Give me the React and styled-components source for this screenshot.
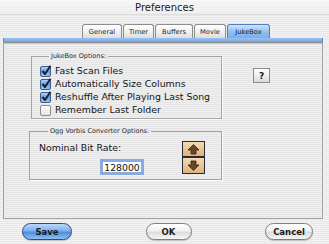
import styled, { createGlobalStyle } from "styled-components"

const GlobalStyle = createGlobalStyle`
  html, body {
    margin: 0;
    padding: 0;
  }
  body {
    width: 329px;
    height: 244px;
    overflow: hidden;
    font-family: "DejaVu Sans", "Liberation Sans", sans-serif;
    color: #1c1c1c;
    background: repeating-linear-gradient(to bottom, #f3f3f3 0 1px, #e7e7e7 1px 2px);
  }
`

const Window = styled.div`
  display: flex;
  flex-direction: column;
  width: 329px;
  height: 244px;
`

const TitleBar = styled.div`
  height: 14px;
  display: flex;
  align-items: center;
  justify-content: center;
  font-size: 10px;
  color: #202020;
  background: linear-gradient(to bottom, rgba(255,255,255,0.5), rgba(255,255,255,0.1));
  border-bottom: 1px solid rgba(0, 0, 0, 0.1);
`

const TabRow = styled.div`
  display: flex;
  gap: 1px;
  align-items: flex-end;
  height: 14px;
  margin-top: 9px;
  padding-left: 82px;
`

const Tab = styled.div`
  box-sizing: border-box;
  width: ${p => p.$w}px;
  height: 14px;
  display: flex;
  align-items: center;
  justify-content: center;
  font-size: 6.7px;
  color: #222;
  border: 1px solid ${p => (p.$active ? "#4f7fbf" : "#8c8c8c")};
  border-bottom: none;
  border-radius: 3px 3px 0 0;
  background: ${p =>
    p.$active
      ? "linear-gradient(to bottom, #cfe3fa, #8fbcf0 55%, #7aaeea)"
      : "linear-gradient(to bottom, #ffffff, #f1f1f1 50%, #dedede)"};
`

const Panel = styled.div`
  display: flex;
  flex-direction: column;
  height: 181px;
  margin: 0 6px 0 3px;
`

const TabBar = styled.div`
  height: 4px;
  background: linear-gradient(to bottom, #9cc3f2, #6ea2e4);
  border-left: 1px solid #5e8cc8;
  border-right: 1px solid #5e8cc8;
`

const PaneBody = styled.div`
  flex: 1;
  display: flex;
  align-items: flex-start;
  border: 1px solid #a2a2a2;
  border-top: 1px solid #8e8e8e;
  box-shadow: inset 0 1px 0 #c9c9c9;
  background: repeating-linear-gradient(to bottom, #efefef 0 1px, #e5e5e5 1px 2px);
`

const Groups = styled.div`
  display: flex;
  flex-direction: column;
`

const Group = styled.fieldset`
  box-sizing: border-box;
  width: ${p => p.$w}px;
  margin: ${p => p.$top}px 0 0 ${p => p.$left}px;
  padding: ${p => p.$pad};
  border: 1px solid #a4a4a4;
  box-shadow: 1px 1px 0 rgba(255, 255, 255, 0.8);
`

const Legend = styled.legend`
  font-size: 6.5px;
  line-height: 8px;
  padding: 0 2px;
  margin-left: 9px;
  color: #2a2a2a;
`

const CheckRow = styled.label`
  display: flex;
  align-items: center;
  gap: 2px;
  height: 13px;
  font-size: 9.4px;
  color: #151515;
  white-space: nowrap;
`

const HelpButton = styled.div`
  box-sizing: border-box;
  width: 17px;
  height: 15px;
  margin: 25px 0 0 31px;
  display: flex;
  align-items: center;
  justify-content: center;
  font-size: 9px;
  font-weight: bold;
  border: 1px solid #8a8a8a;
  background: linear-gradient(to bottom, #ffffff, #ececec 60%, #d9d9d9);
`

const RateRow = styled.div`
  display: flex;
  align-items: flex-start;
`

const RateColumn = styled.div`
  display: flex;
  flex-direction: column;
  width: 105px;
`

const FieldLabel = styled.div`
  font-size: 9.4px;
  line-height: 13px;
  color: #151515;
  white-space: nowrap;
`

const NumberField = styled.input`
  box-sizing: border-box;
  width: 44px;
  height: 16px;
  margin: 5px 0 0 61px;
  padding: 0;
  text-align: center;
  font-family: "DejaVu Sans", sans-serif;
  font-size: 9.3px;
  color: #111;
  background: #fff;
  border: 2px solid #82acea;
  box-shadow: inset 0 0 0 1px #9aa9bf;
  outline: none;
`

const StepperWrap = styled.div`
  margin-left: 38px;
  line-height: 0;
`

const Footer = styled.div`
  display: flex;
  justify-content: space-between;
  padding: 4px 16px 0 22px;
`

const PushButton = styled.div`
  box-sizing: border-box;
  width: ${p => p.$w}px;
  height: 17px;
  display: flex;
  align-items: center;
  justify-content: center;
  font-size: 8.5px;
  font-weight: bold;
  color: #1b1b1b;
  border-radius: 9px;
  border: 1px solid ${p => (p.$primary ? "#2d4a7a" : "#7d7d7d")};
  background: ${p =>
    p.$primary
      ? "linear-gradient(to bottom, #bcd8f8, #7fb0ee 45%, #4f8de0 55%, #8cc0f4)"
      : "linear-gradient(to bottom, #ffffff, #f2f2f2 45%, #dcdcdc 55%, #f7f7f7)"};
  box-shadow: 0 1px 1px rgba(0, 0, 0, 0.2);
`

function CheckBox({ checked }) {
  return (
    <svg width="13" height="12" viewBox="0 0 13 12">
      <defs>
        <linearGradient id="cbBlue" x1="0" y1="0" x2="0" y2="1">
          <stop offset="0" stopColor="#b7d4f6" />
          <stop offset="0.5" stopColor="#6aa0e6" />
          <stop offset="1" stopColor="#9cc6f3" />
        </linearGradient>
        <linearGradient id="cbWhite" x1="0" y1="0" x2="0" y2="1">
          <stop offset="0" stopColor="#ffffff" />
          <stop offset="1" stopColor="#e4e4e4" />
        </linearGradient>
      </defs>
      <rect
        x="0.5"
        y="1.5"
        width="10"
        height="10"
        rx="1.5"
        fill={checked ? "url(#cbBlue)" : "url(#cbWhite)"}
        stroke={checked ? "#3d5c8c" : "#8a8a8a"}
      />
      {checked && (
        <path
          d="M2.5 6 L5 9 L10.5 0.8"
          fill="none"
          stroke="#1a2232"
          strokeWidth="2"
          strokeLinejoin="round"
        />
      )}
    </svg>
  )
}

function Stepper() {
  return (
    <svg width="23" height="33" viewBox="0 0 23 33">
      <defs>
        <linearGradient id="tan" x1="0" y1="0" x2="0" y2="1">
          <stop offset="0" stopColor="#f4dcb6" />
          <stop offset="1" stopColor="#dcb07a" />
        </linearGradient>
      </defs>
      <rect x="0.5" y="0.5" width="22" height="15" fill="url(#tan)" stroke="#2e2a33" />
      <rect x="0.5" y="16.5" width="22" height="16" fill="url(#tan)" stroke="#2e2a33" />
      <path
        d="M11.5 3.5 L17 9 L14 9 L14 13 L9 13 L9 9 L6 9 Z"
        fill="#6b4528"
        stroke="#3a2414"
        strokeWidth="0.8"
        strokeLinejoin="round"
      />
      <path
        d="M11.5 29.5 L17 24 L14 24 L14 20 L9 20 L9 24 L6 24 Z"
        fill="#6b4528"
        stroke="#3a2414"
        strokeWidth="0.8"
        strokeLinejoin="round"
      />
    </svg>
  )
}

const tabs = [
  { label: "General", w: 40 },
  { label: "Timer", w: 31 },
  { label: "Buffers", w: 38 },
  { label: "Movie", w: 32 },
  { label: "JukeBox", w: 43, active: true },
]

const options = [
  { label: "Fast Scan Files", checked: true },
  { label: "Automatically Size Columns", checked: true },
  { label: "Reshuffle After Playing Last Song", checked: true },
  { label: "Remember Last Folder", checked: false },
]

export default function App() {
  return (
    <>
      <GlobalStyle />
      <Window>
        <TitleBar>Preferences</TitleBar>
        <TabRow>
          {tabs.map(t => (
            <Tab key={t.label} $w={t.w} $active={t.active}>
              {t.label}
            </Tab>
          ))}
        </TabRow>
        <Panel>
          <TabBar />
          <PaneBody>
            <Groups>
              <Group $w={191} $top={9} $left={27} $pad="4px 0 2px 8px">
                <Legend>JukeBox Options:</Legend>
                {options.map(o => (
                  <CheckRow key={o.label}>
                    <CheckBox checked={o.checked} />
                    {o.label}
                  </CheckRow>
                ))}
              </Group>
              <Group $w={193} $top={8} $left={25} $pad="6px 0 4px 9px">
                <Legend>Ogg Vorbis Converter Options:</Legend>
                <RateRow>
                  <RateColumn>
                    <FieldLabel>Nominal Bit Rate:</FieldLabel>
                    <NumberField defaultValue="128000" readOnly />
                  </RateColumn>
                  <StepperWrap>
                    <Stepper />
                  </StepperWrap>
                </RateRow>
              </Group>
            </Groups>
            <HelpButton>?</HelpButton>
          </PaneBody>
        </Panel>
        <Footer>
          <PushButton $w={50} $primary>Save</PushButton>
          <PushButton $w={46}>OK</PushButton>
          <PushButton $w={48}>Cancel</PushButton>
        </Footer>
      </Window>
    </>
  )
}
